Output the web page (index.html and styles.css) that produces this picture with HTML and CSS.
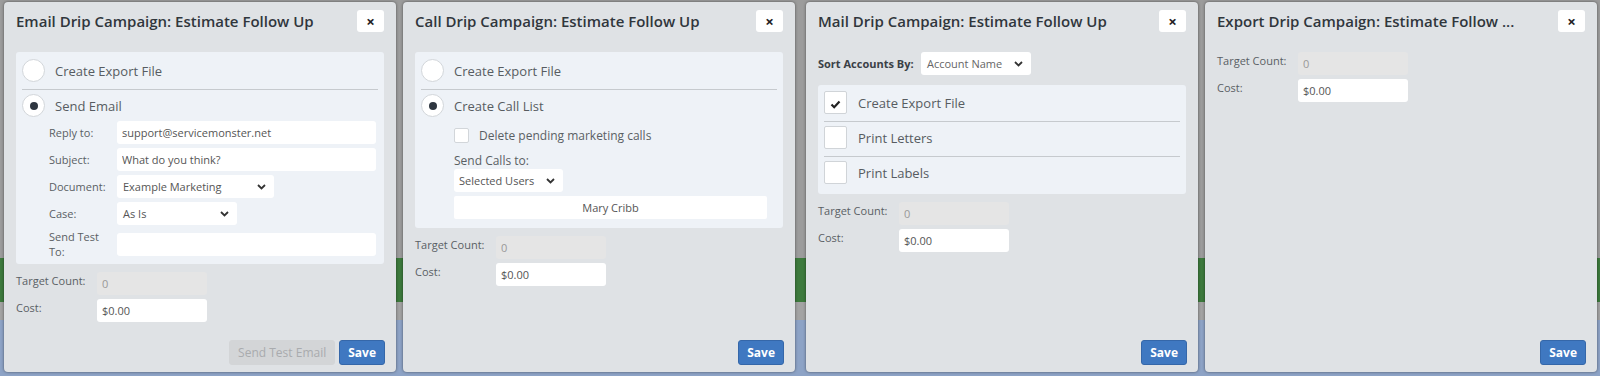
FILE: index.html
```html
<!DOCTYPE html>
<html lang="en">
<head>
  <meta charset="UTF-8">
  <meta name="viewport" content="width=device-width, initial-scale=1.0">
  <title>Drip Campaign Steps</title>
  <link rel="stylesheet" href="styles.css">
</head>
<body>
  <!-- email step -->
  <div class="modal">
    <div class="modal-header">
      <h2 class="modal-title">Email Drip Campaign: Estimate Follow Up</h2>
      <button class="close">&times;</button>
    </div>
    <div class="modal-body">
      <div class="choices">
        <div class="choice sep"><span class="radio"></span><span class="choice-label">Create Export File</span></div>
        <div class="choice"><span class="radio on"></span><span class="choice-label">Send Email</span></div>
        <div class="sub email-form">
          <label>Reply to:</label>
          <input class="field" type="text" value="support@servicemonster.net">
          <label>Subject:</label>
          <input class="field" type="text" value="What do you think?">
          <label>Document:</label>
          <div class="select select-doc"><span>Example Marketing</span><svg width="9" height="6" viewBox="0 0 9 6"><polyline points="1,1 4.5,4.5 8,1" fill="none" stroke="#333" stroke-width="1.8"/></svg></div>
          <label>Case:</label>
          <div class="select select-case"><span>As Is</span><svg width="9" height="6" viewBox="0 0 9 6"><polyline points="1,1 4.5,4.5 8,1" fill="none" stroke="#333" stroke-width="1.8"/></svg></div>
          <label class="label-wrap">Send Test To:</label>
          <input class="field" type="text" value="">
        </div>
      </div>
      <div class="stats">
        <label>Target Count:</label>
        <input class="field" type="text" value="0" disabled>
        <label>Cost:</label>
        <input class="field" type="text" value="$0.00">
      </div>
    </div>
    <div class="modal-footer">
      <button class="btn btn-disabled">Send Test Email</button>
      <button class="btn btn-primary">Save</button>
    </div>
  </div>

  <!-- call step -->
  <div class="modal">
    <div class="modal-header">
      <h2 class="modal-title">Call Drip Campaign: Estimate Follow Up</h2>
      <button class="close">&times;</button>
    </div>
    <div class="modal-body">
      <div class="choices">
        <div class="choice sep"><span class="radio"></span><span class="choice-label">Create Export File</span></div>
        <div class="choice"><span class="radio on"></span><span class="choice-label">Create Call List</span></div>
        <div class="sub call-form">
          <div class="check-row"><span class="check-sm"></span>Delete pending marketing calls</div>
          <div class="call-label">Send Calls to:</div>
          <div class="select select-users"><span>Selected Users</span><svg width="9" height="6" viewBox="0 0 9 6"><polyline points="1,1 4.5,4.5 8,1" fill="none" stroke="#333" stroke-width="1.8"/></svg></div>
          <div class="user-chip">Mary Cribb</div>
        </div>
      </div>
      <div class="stats">
        <label>Target Count:</label>
        <input class="field" type="text" value="0" disabled>
        <label>Cost:</label>
        <input class="field" type="text" value="$0.00">
      </div>
    </div>
    <div class="modal-footer">
      <button class="btn btn-primary">Save</button>
    </div>
  </div>

  <!-- mail step -->
  <div class="modal modal-mail">
    <div class="modal-header">
      <h2 class="modal-title">Mail Drip Campaign: Estimate Follow Up</h2>
      <button class="close">&times;</button>
    </div>
    <div class="modal-body">
      <div class="sort-row">
        <span class="sort-label">Sort Accounts By:</span>
        <div class="select select-sort"><span>Account Name</span><svg width="9" height="6" viewBox="0 0 9 6"><polyline points="1,1 4.5,4.5 8,1" fill="none" stroke="#333" stroke-width="1.8"/></svg></div>
      </div>
      <div class="choices">
        <div class="choice sep"><span class="check on"><svg width="11" height="9" viewBox="0 0 11 9"><polyline points="1.5,4.5 4.2,7.2 9.5,1.5" fill="none" stroke="#222" stroke-width="2.2"/></svg></span><span class="choice-label">Create Export File</span></div>
        <div class="choice sep"><span class="check"></span><span class="choice-label">Print Letters</span></div>
        <div class="choice"><span class="check"></span><span class="choice-label">Print Labels</span></div>
      </div>
      <div class="stats">
        <label>Target Count:</label>
        <input class="field" type="text" value="0" disabled>
        <label>Cost:</label>
        <input class="field" type="text" value="$0.00">
      </div>
    </div>
    <div class="modal-footer">
      <button class="btn btn-primary">Save</button>
    </div>
  </div>

  <!-- export step -->
  <div class="modal">
    <div class="modal-header">
      <h2 class="modal-title">Export Drip Campaign: Estimate Follow ...</h2>
      <button class="close">&times;</button>
    </div>
    <div class="modal-body">
      <div class="stats">
        <label>Target Count:</label>
        <input class="field" type="text" value="0" disabled>
        <label>Cost:</label>
        <input class="field" type="text" value="$0.00">
      </div>
    </div>
    <div class="modal-footer">
      <button class="btn btn-primary">Save</button>
    </div>
  </div>
</body>
</html>
```

FILE: styles.css
```css
body {
  margin: 0;
  height: 376px;
  padding: 2px 0 0 4px;
  box-sizing: border-box;
  display: flex;
  gap: 7px;
  font-family: "Open Sans", sans-serif;
  color: #555b60;
  background: linear-gradient(#9c9c9c 0, #9c9c9c 258px, #3d7a3d 258px, #3d7a3d 302px, #a3a3a3 302px, #a3a3a3 320px, #8da3c6 320px, #8da3c6 100%);
}
.modal {
  width: 392px;
  height: 370px;
  flex-shrink: 0;
  display: flex;
  flex-direction: column;
  background-color: #dfe2e5;
  border-radius: 4px;
  box-shadow: 0 0 3px rgba(0, 0, 0, 0.5);
}
.modal-mail {
  margin-left: 4px;
}
.modal-header {
  display: flex;
  align-items: center;
  justify-content: space-between;
  padding: 8px 12px 0;
}
.modal-title {
  margin: 0;
  font-size: 15px;
  font-weight: 600;
  color: #30363c;
  white-space: nowrap;
}
.close {
  width: 27px;
  height: 22px;
  padding: 0;
  border: none;
  border-radius: 3px;
  background-color: #fff;
  color: #222;
  font-family: "Open Sans", sans-serif;
  font-size: 15px;
  font-weight: 700;
  line-height: 22px;
}
.modal-body {
  padding: 20px 12px 0;
}
.choices {
  background-color: #eef2f7;
  border-radius: 3px;
  padding: 7px 6px 5px;
}
.modal-mail .choices {
  padding: 6px 6px 10px;
}
.choice {
  display: flex;
  align-items: center;
}
.choice.sep {
  padding-bottom: 7px;
  border-bottom: 1px solid #c6cace;
  margin-bottom: 4px;
}
.choice-label {
  font-size: 13px;
  color: #575c61;
}
.radio {
  width: 21px;
  height: 21px;
  border: 1px solid #d2d6da;
  border-radius: 50%;
  background-color: #fff;
  margin-right: 10px;
  display: flex;
  align-items: center;
  justify-content: center;
}
.radio.on::after {
  content: "";
  width: 8px;
  height: 8px;
  border-radius: 50%;
  background-color: #2e3640;
}
.check {
  width: 21px;
  height: 21px;
  border: 1px solid #d0d4d8;
  border-radius: 2px;
  background-color: #fff;
  margin-right: 11px;
  display: flex;
  align-items: center;
  justify-content: center;
}
.check svg {
  margin-top: 3px;
}
.sub {
  padding: 0 2px 0 27px;
}
.email-form {
  margin-top: 4px;
  display: grid;
  grid-template-columns: 64px 1fr;
  column-gap: 4px;
  row-gap: 4px;
  align-items: center;
}
.email-form label,
.stats label {
  font-size: 11px;
  line-height: 16px;
  color: #5a5f64;
}
.email-form .label-wrap {
  line-height: 15px;
}
.field {
  height: 23px;
  box-sizing: border-box;
  border: none;
  border-radius: 3px;
  padding: 0 5px;
  background-color: #fff;
  font-family: "Open Sans", sans-serif;
  font-size: 11px;
  color: #555;
  outline: none;
}
.field:disabled {
  background-color: #e5e5e5;
  color: #999;
}
.select {
  height: 23px;
  box-sizing: border-box;
  border-radius: 3px;
  padding: 0 8px 0 6px;
  background-color: #fff;
  display: flex;
  align-items: center;
  justify-content: space-between;
  font-size: 11px;
  color: #555;
}
.select-doc {
  width: 157px;
}
.select-case {
  width: 120px;
}
.select-users {
  width: 109px;
  padding-left: 5px;
}
.select-sort {
  width: 110px;
  padding-left: 6px;
  color: #666;
}
.call-form {
  padding: 0 10px 4px 33px;
}
.check-row {
  margin-top: 8px;
  height: 21px;
  display: flex;
  align-items: center;
  font-size: 12px;
  color: #5a5f64;
}
.check-sm {
  width: 13px;
  height: 13px;
  border: 1px solid #d2d6da;
  border-radius: 2px;
  background-color: #fff;
  margin-right: 10px;
}
.call-label {
  margin-top: 7px;
  font-size: 12px;
  line-height: 16px;
  color: #5a5f64;
}
.user-chip {
  margin-top: 4px;
  height: 23px;
  border-radius: 2px;
  background-color: #fff;
  display: flex;
  align-items: center;
  justify-content: center;
  font-size: 11px;
  color: #555;
}
.sort-row {
  display: flex;
  align-items: center;
  margin-bottom: 10px;
}
.sort-label {
  width: 103px;
  font-size: 11px;
  font-weight: 700;
  color: #3a4046;
}
.stats {
  margin-top: 8px;
  display: grid;
  grid-template-columns: 77px 110px;
  column-gap: 4px;
  row-gap: 4px;
}
.stats:first-child {
  margin-top: 0;
}
.stats label {
  padding-top: 1px;
}
.modal-footer {
  margin-top: auto;
  display: flex;
  justify-content: flex-end;
  gap: 4px;
  padding: 0 11px 7px 0;
}
.btn {
  height: 25px;
  box-sizing: border-box;
  padding: 0 8px;
  border-radius: 3px;
  font-family: "Open Sans", sans-serif;
  font-size: 12px;
}
.btn-primary {
  border: 1px solid #3567a9;
  background-color: #3f78c1;
  color: #fff;
  font-weight: 700;
}
.btn-disabled {
  border: 1px solid #d3d5d7;
  background-color: #d3d5d7;
  color: #a9abae;
}
```
